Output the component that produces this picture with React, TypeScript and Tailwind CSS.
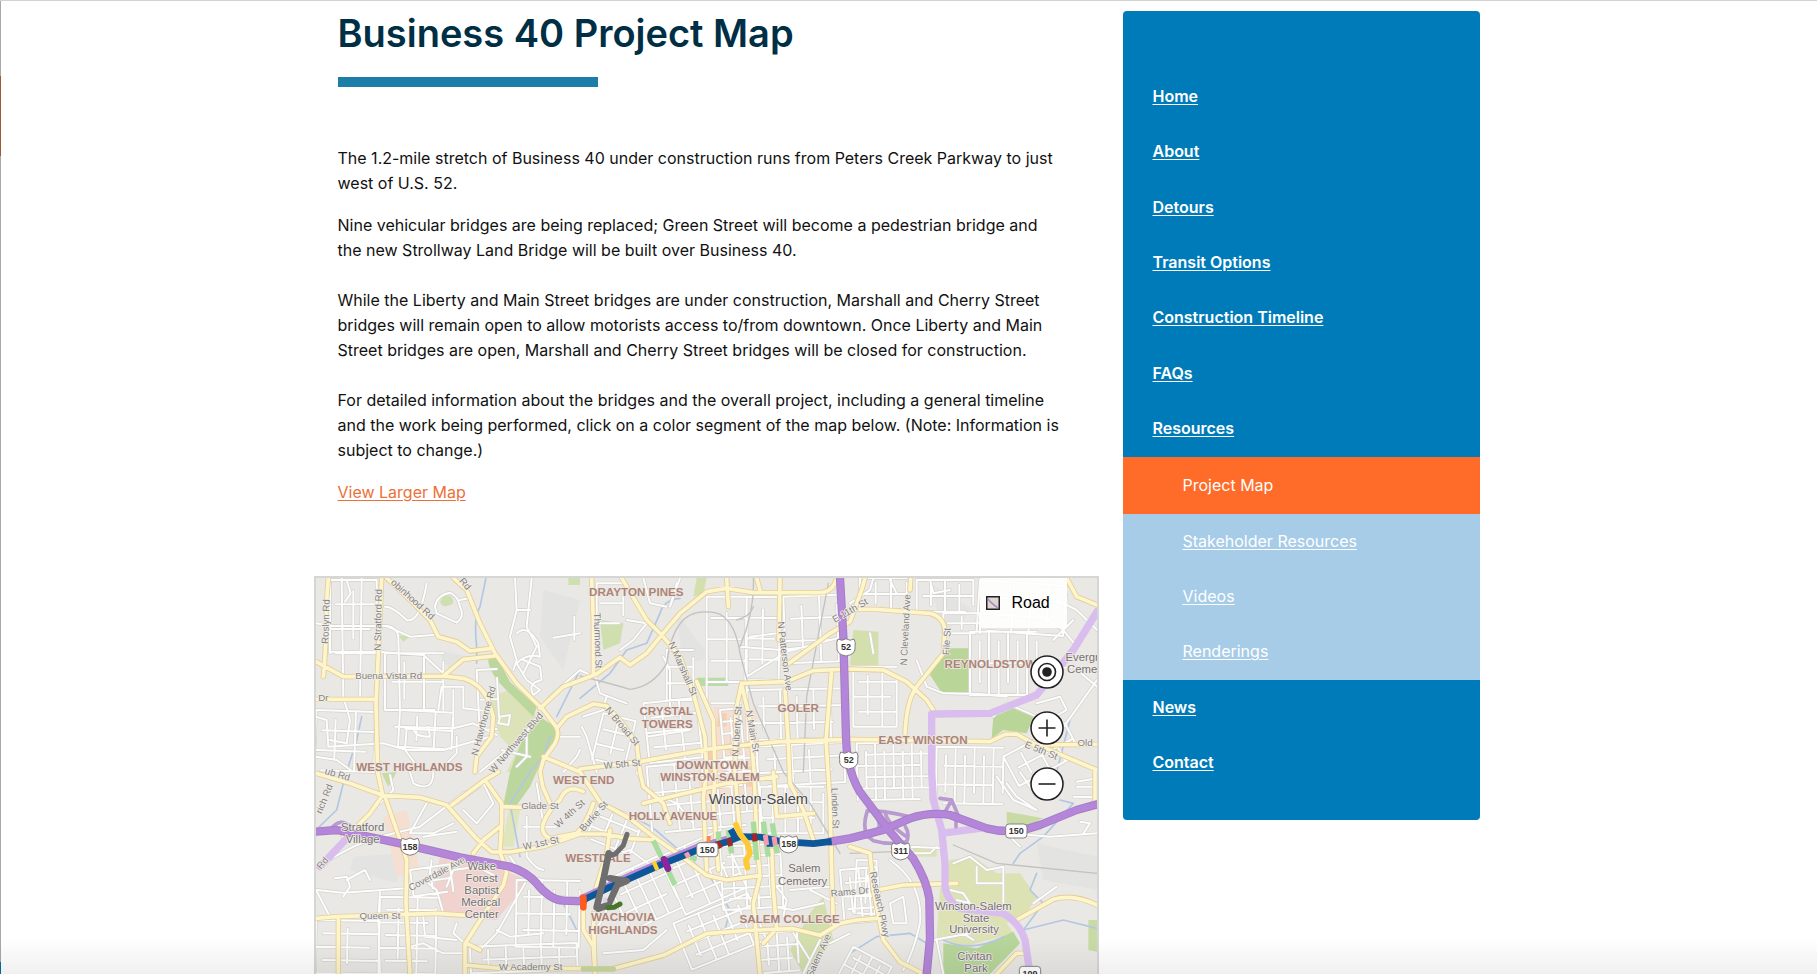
import type { ReactNode } from 'react';

type Grid = [x: number, y: number, w: number, h: number, cols: number, rows: number, angle: number];
type Label = [text: string, x: number, y: number, angle?: number];

const topLinks = ['Home', 'About', 'Detours', 'Transit Options', 'Construction Timeline', 'FAQs', 'Resources'];
const subLinks = ['Stakeholder Resources', 'Videos', 'Renderings'];
const endLinks = ['News', 'Contact'];

const grids: Grid[] = [
  [60, 30, 140, 220, 2, 3, 0],
  [225, 250, 175, 170, 3, 2, 0],
  [270, 420, 160, 110, 3, 2, 3],
  [18, 420, 180, 180, 3, 3, 2],
  [500, 300, 60, 180, 1, 2, -3],
  [210, 980, 170, 230, 3, 6, 1],
  [18, 1050, 190, 160, 2, 4, 1],
  [480, 1130, 320, 80, 6, 2, -2],
  [620, 930, 190, 200, 5, 4, 1],
  [300, 900, 120, 80, 2, 2, -8],
  [860, 40, 80, 120, 1, 2, 0],
  [1190, 80, 120, 320, 2, 5, 0],
  [1310, 80, 100, 250, 2, 4, 1],
  [1420, 80, 160, 200, 3, 3, -2],
  [1000, 400, 160, 180, 3, 4, -6],
  [1310, 360, 300, 150, 6, 3, -1],
  [1230, 420, 60, 180, 2, 5, -5],
  [1010, 590, 330, 200, 8, 5, -5],
  [1340, 530, 260, 120, 5, 3, -3],
  [1350, 650, 190, 140, 5, 3, 0],
  [1650, 24, 140, 95, 3, 2, 0],
  [1820, 30, 170, 95, 4, 2, 0],
  [1900, 130, 110, 60, 2, 2, 0],
  [1980, 185, 200, 190, 7, 2, 0],
  [2010, 30, 260, 150, 5, 3, 4],
  [1630, 290, 130, 180, 3, 4, 0],
  [1640, 520, 220, 170, 8, 5, -1],
  [1880, 530, 200, 170, 7, 3, 1],
  [2080, 560, 210, 100, 4, 2, -28],
  [890, 930, 170, 170, 4, 3, -25],
  [1050, 860, 200, 190, 5, 4, -24],
  [1090, 1060, 240, 150, 6, 4, -22],
  [1340, 1090, 120, 120, 4, 3, -4],
  [870, 700, 140, 110, 3, 3, 22],
  [1230, 830, 180, 190, 5, 6, -3],
  [1590, 900, 110, 160, 4, 4, -5],
  [1630, 1130, 130, 90, 4, 3, 28],
  [1640, 870, 60, 160, 2, 3, 2],
  [880, 430, 100, 140, 2, 3, 14],
  [1070, 240, 80, 150, 1, 3, 0],
];

const gridPath = ([x, y, w, h, cols, rows, angle]: Grid) => {
  const a = (angle * Math.PI) / 180;
  const p = (u: number, v: number) =>
    `${Math.round(x + u * Math.cos(a) - v * Math.sin(a))} ${Math.round(y + u * Math.sin(a) + v * Math.cos(a))}`;
  let d = '';
  for (let i = 0; i <= cols; i++) d += `M${p((w * i) / cols, i % 2 ? h * 0.15 : 0)}L${p((w * i) / cols, i % 3 === 1 ? h * 0.8 : h)}`;
  for (let j = 0; j <= rows; j++) d += `M${p(j % 2 ? w * 0.12 : 0, (h * j) / rows)}L${p(j % 3 === 2 ? w * 0.85 : w, (h * j) / rows)}`;
  return d;
};

const streets = [
  ...grids.map(gridPath),
  'M95 24L100 380L120 450L110 520L60 510M155 24L150 390M110 30L122 70L105 95M225 110Q250 110 290 150Q330 160 350 40M18 160L60 168L230 168Q260 170 265 200L270 420M60 245L200 245L340 255L400 310M230 168L300 200L370 195',
  'M375 110Q380 75 420 68Q445 80 450 110Q465 140 440 158L380 130ZM450 90L480 84M615 24L620 120L600 200L620 270L610 300M665 24L650 170L680 230L640 310M620 120L660 120M620 190Q650 160 685 220L690 260Q650 250 620 280L650 330L690 360L670 375Q650 340 695 330L690 290L640 270M730 203L810 190M793 140L793 210',
  'M18 440L50 450L55 530L220 520L290 540L400 540L540 500M255 470L430 475L490 460L560 495M385 420L395 350L460 350L460 415L550 425M430 360L430 470M290 475L285 540L330 600M312 480Q315 500 360 500L355 470M440 500L440 550L400 590M570 440L600 435L595 465L565 460Z',
  'M510 606L640 500L720 380L810 300M18 560L80 570L130 606M575 540L660 560M650 490L650 560L620 590M760 606L800 560L810 540M740 500L810 500',
  'M18 890L130 830L210 800L330 770L460 670L530 640M240 615L250 660L210 700M300 606L310 640Q370 670 370 606M350 700L300 790L370 790L430 760M340 800L440 785M75 925L110 920L120 950L100 980M110 930L165 900M165 900L180 930M20 960L100 968L290 955M18 960L60 1040M210 960L205 1050L210 1212M365 870L355 940L380 960L400 1030M410 950L430 900L500 890L560 920M645 940L560 1090L510 1140M340 1040L345 1100L440 1110M440 1060L430 1090L465 1120M560 1080L600 1100L700 1090M300 1130L340 1120L400 1150L465 1150',
  'M650 740L650 860Q680 900 700 900M640 770L740 770M600 860L640 920L700 930M680 640L700 760M440 700L520 640L550 700L500 760L460 720',
  'M860 606L830 500L815 470M1100 40L1080 110L1110 24M1000 24L1020 100L1070 110M1140 480L1010 500M1060 260L1080 300L1080 420M850 300L870 370L950 400M820 440L880 420M890 380L880 410M810 300L850 320M950 150L1010 160L970 210L930 240',
  'M1310 320L1430 245L1540 215L1600 200M1320 200L1400 190M1290 230L1410 240L1500 230M1620 100L1680 60L1690 24M1740 30L1760 70M1860 30L1870 70L1920 60M1680 190L1690 250M1820 270L1850 350L1900 370L2010 372L2090 380M2150 110L2260 180L2300 230M2230 210L2290 150M2240 90L2300 120L2361 180M2200 300L2290 290L2361 350M2180 400L2250 380L2270 420L2180 470M2240 500L2361 330M2050 440L2090 400L2180 440',
  'M2060 620L2110 690L2180 720L2120 680L2090 640M2130 606L2180 680L2260 640M2361 625L2300 635M2300 650L2361 650M2290 680L2361 682M2010 775L2100 790L2220 800L2361 790M2310 755L2340 760L2320 790M2100 800L2130 830M1790 850L1860 850L1880 830M1800 830L1905 835M1930 880L1980 860L2030 900L2080 890L2080 1000M2000 890L2000 940L2080 940M1920 960L1960 970L1980 1000L1940 990M1740 1000L1780 980L1790 1060L1750 1060ZM1740 870Q1840 940 1830 1060Q1810 1150 1780 1200M1870 1110L1980 1090M1960 1090L1990 1110M1880 1110L1900 1212M2170 1000L2240 950',
  'M1400 950L1430 990L1420 1040M1390 1010L1450 1020L1540 1000M1450 1090L1500 1170L1480 1212M1530 1110L1490 1190M1500 960L1580 1000M1440 960L1560 950M980 606L1010 660L1100 700L1150 760M900 860L960 840L1040 900M880 1150L1000 1140L1070 1080M830 1100L870 1060L900 1000M1560 1120L1620 1090',
];

const roads = [
  'M55 24L50 90L48 200L43 290L40 320',
  'M215 24L212 100L205 250L198 400L203 606L218 676',
  'M18 275L100 320L400 318L460 325Q510 340 535 390L550 440L545 500L500 560L495 606',
  'M18 388L195 388',
  'M430 24L470 60L510 160L555 250L620 340L700 420L738 470Q750 490 735 520L700 570L690 606L698 650L720 700',
  'M230 24L300 90L360 150L385 200L440 215L480 243L545 235',
  'M400 318L460 268L552 258',
  'M690 415L760 350L860 312L930 262L960 285L1010 250L1055 195L1110 130L1190 65L1250 55L1330 68L1530 68Q1570 66 1580 24',
  'M740 475L770 440L850 402L890 408L930 450L980 520L990 606L1000 650L1060 700L1080 760',
  'M700 560L810 606L870 696L960 746L1030 800L1110 856L1190 916L1250 930L1350 916',
  'M18 610L120 640L218 676L330 682L410 705L500 806L545 846L600 846L700 830L810 792L880 792L960 806L1040 810',
  'M218 676L180 730L130 780L100 800',
  'M225 680L270 810L290 870L288 1000L300 1212',
  'M425 705L525 630L565 606M525 630L575 700L575 756L570 846L590 906L580 946L520 1036L465 1121L465 1212',
  'M490 850L520 810L570 770',
  'M575 710L640 712M470 1120L510 1140',
  'M18 1045L80 1040L380 1030L470 1036M85 1040L85 1212',
  'M465 1185L570 1195L910 1196L1060 1156L1190 1091L1310 1081L1450 1076L1530 1096L1590 1060L1640 1050L1700 1045',
  'M820 665Q770 640 750 690Q715 720 700 760Q690 790 720 806L800 790Q830 760 850 700',
  'M820 990L820 1080L850 1130L855 1212M850 1030L855 1212M900 780L890 850L850 980',
  'M935 24L1010 150L1055 195L1110 260L1150 370L1185 500L1190 606L1180 680L1190 900',
  'M1160 335L1210 450L1215 606L1210 700L1225 900',
  'M845 24L850 150L850 310',
  'M1410 24L1407 210M1425 360L1435 520L1440 640L1480 720L1510 810M1390 606L1400 740L1510 730',
  'M1295 340L1430 335L1510 302L1620 297L1720 300L1790 335L1850 390L1870 420',
  'M1430 285L1560 190L1620 155L1655 60L1665 24',
  'M810 597L990 575L1210 535L1410 515L1620 508L2040 515L2085 493L2120 492L2160 515L2361 600M2160 525L2361 523',
  'M1295 340L1278 420L1275 606L1290 800M1295 345L1320 450L1332 606L1340 800L1350 920L1330 1000L1350 1212',
  'M1385 840L1390 960L1400 1076L1360 1120',
  'M1565 300L1548 510L1560 700L1565 900L1570 1060',
  'M1620 118L1700 118L1860 130Q1900 140 1905 180L1900 250L1820 350Q1790 390 1785 490',
  'M2270 24L2300 80L2361 105M1802 24L1800 60',
  'M1620 830L1680 850L1690 960L1720 1110L1770 1176L1840 1212',
  'M1700 960L1780 945L1940 940',
  'M2120 1050L2230 988Q2290 970 2361 1005M2060 1212L2120 1150L2150 1150M2355 606L2355 700',
  'M1250 24L1255 110M1350 60L1340 24M1000 700L1250 640L1400 620',
];

const parks: [string, string][] = [
  ['#cfe0b0', 'M400 75Q430 70 430 100Q400 120 390 95ZM262 195L300 200L280 215ZM775 24L810 24L810 45L775 45Z'],
  ['#dce3b8', 'M535 380L600 360L680 440L600 530L570 500ZM590 606L640 500L740 480L640 606Z'],
  ['#bcd79d', 'M535 262L560 262L600 335L680 410L670 440L610 380Q530 310 535 262ZM690 440L735 470L740 510L700 560L660 650L620 706L580 706L600 606L640 500Z'],
  ['#dfe6bb', 'M600 700L630 720L610 830L575 830Z'],
  ['#cfdfae', 'M870 150L940 160L930 220L880 240Z'],
  ['#d3dfac', 'M1160 24L1190 24L1180 70L1150 80ZM1630 180L1705 185L1705 285L1620 285ZM1500 1030L1540 980L1570 1110L1480 1212L1440 1140Z'],
  ['#b5dda5', 'M1160 323L1255 323L1255 348L1165 348Z'],
  ['#b9d597', 'M1900 235L1975 235L1975 368L1895 368L1860 315ZM2050 440L2110 415L2170 440L2150 490L2080 480L2045 505Z'],
  ['#c8dba5', 'M2090 725L2200 745L2150 770L2090 770ZM215 610L260 606L235 650ZM2335 1050L2361 1050L2361 1145L2335 1140Z'],
  ['#dde2b5', 'M1920 870L1990 860L2060 910L2130 910L2180 980L2150 1030L2090 1060L2110 1090L1960 1130L1880 1100L1890 960ZM1810 830L1880 830L1880 860L1810 860Z'],
  ['#b7d69b', 'M1900 1120L2000 1135L2110 1085L2130 1120L2040 1212L1900 1212Z'],
  ['#f0d3cf', 'M390 860L480 860L650 930L610 990L560 1050L400 1040L370 960Z'],
  ['#f5dfd1', 'M1210 410L1340 420L1340 700L1190 690L1150 606L1210 590ZM220 740L290 720L330 900L260 920Z'],
  ['#f7cfae', 'M1225 430L1250 430L1250 470L1220 470ZM1260 460L1290 460L1290 600L1260 600ZM1180 540L1215 540L1215 620L1180 620ZM1300 590L1330 590L1330 650L1300 650Z'],
];

const waters = [
  'M528 24L510 110Q490 140 500 230L500 280M155 440L140 510L110 606M100 640L80 720L18 780M810 300L740 440M720 500L700 560L660 606L600 700L630 860',
  'M1110 85Q1060 90 1050 130L1010 220L950 240L900 310L810 385M960 740Q1020 760 1060 800L1200 920L1260 1020L1240 1100M760 1000L810 1100',
  'M2250 690L2290 700L2200 800L2130 850L2110 880M2180 910L2160 960L2200 1000L2140 1080L2260 1050L2361 1075M1900 1110Q1980 1150 2080 1100M1620 1150L1700 1100L1800 1090L1850 1120M2280 450L2240 606',
];

const hoods: Label[] = [
  ['WEST HIGHLANDS', 298, 604], ['DRAYTON PINES', 979, 78], ['CRYSTAL', 1069, 434], ['TOWERS', 1072, 473],
  ['DOWNTOWN', 1207, 597], ['WINSTON-SALEM', 1200, 634], ['GOLER', 1465, 425], ['WEST END', 821, 641],
  ['HOLLY AVENUE', 1089, 749], ['WESTDALE', 864, 876], ['WACHOVIA', 939, 1052], ['HIGHLANDS', 939, 1091],
  ['SALEM COLLEGE', 1439, 1060], ['EAST WINSTON', 1839, 521], ['REYNOLDSTOWN', 2054, 293],
];

const places: Label[] = [
  ['Stratford', 158, 784], ['Village', 158, 819], ['Wake', 515, 899], ['Forest', 515, 936], ['Baptist', 515, 972],
  ['Medical', 512, 1008], ['Center', 515, 1043], ['Salem', 1483, 905], ['Cemetery', 1478, 944],
  ['Winston-Salem', 1990, 1019], ['State', 1998, 1055], ['University', 1992, 1090], ['Civitan', 1994, 1171], ['Park', 1998, 1207],
];

const roadNames: Label[] = [
  ['Roslyn Rd', 57, 155, -88], ['N Stratford Rd', 214, 150, -89], ['Buena Vista Rd', 236, 326, 0], ['Dr', 40, 393, 0],
  ['Rd', 458, 48, 50], ['obinhood Rd', 302, 95, 42], ['N Hawthorne Rd', 530, 455, -75], ['W Northwest Blvd', 625, 525, -49],
  ['ub Rd', 80, 622, 16], ['rich Rd', 52, 690, -68], ['Rd', 45, 885, -50], ['Coverdale Ave', 385, 920, -28],
  ['Queen St', 210, 1048, 0], ['Glade St', 690, 716, 0], ['W 1st St', 695, 829, -12], ['W 4th St', 785, 738, -42],
  ['W Academy St', 662, 1200, 0], ['Thurmond St', 854, 212, 88], ['N Marshall St', 1110, 300, 66],
  ['N Patterson Ave', 1415, 260, 83], ['E 11th St', 1625, 130, -30], ['N Broad St', 930, 475, 50],
  ['N Liberty St', 1290, 485, -86], ['N Main St', 1318, 485, 80], ['W 5th St', 937, 592, -5], ['Burke St', 858, 745, -48],
  ['Linden St', 1566, 715, 88], ['Rams Dr', 1620, 975, -5], ['Salem Ave', 1535, 1160, -65], ['Research Pkwy', 1700, 1005, 78],
  ['N Cleveland Ave', 1796, 180, -87], ['File St', 1920, 215, -87], ['E 5th St', 2190, 550, 22], ['Old', 2325, 528, 0],
];

const closures: [string, string, number][] = [
  ['#a9dc9f', 'M1030 812L1095 945M1225 785L1228 835M1255 780L1265 850M1330 755L1340 870M1360 755L1375 860M1387 760L1402 850M1140 860L1160 868', 16],
  ['#0d5698', 'M815 992L890 956L970 921L1060 881L1160 841L1250 816L1290 800L1350 801L1410 814L1510 821L1565 814M1262 778L1278 806M1380 815L1380 830', 20],
  ['#f59ab0', 'M1128 848L1136 862M1366 795L1370 825M1392 800L1396 826', 15],
  ['#f98b4b', 'M1190 808L1202 808', 20],
  ['#a32626', 'M1222 815L1232 834M1256 806L1262 828M1332 790L1335 814', 15],
  ['#ffd12e', 'M1031 875L1042 900', 13],
  ['#ffc933', 'M1278 764L1290 792L1312 820L1320 850L1308 870L1312 893', 17],
  ['#8e24a0', 'M1062 868L1074 896', 20],
  ['#6e6e6e', 'M951 793L940 826L916 852L892 858', 15],
  ['#6e6e6e', 'M896 850L882 920L860 1012M900 925L950 933L922 945L895 1005L865 1016', 20],
  ['#48752c', 'M893 1013L912 1012L930 1002', 15],
  ['#ff5a1f', 'M820 983L820 1012', 20],
];

const freeway =
  'M18 785L80 780L270 820L450 862L600 890Q650 905 680 940Q720 990 760 992L820 994M1560 815L1620 805L1720 780L1800 745Q1860 725 1920 735L2030 775Q2110 795 2190 765L2300 720L2361 703M1590 24L1600 200L1608 500Q1610 600 1650 666L1740 785L1810 866Q1850 930 1858 986L1860 1106L1850 1212';

const shieldPath = 'M-24 -24Q-12 -16 0 -25Q12 -16 24 -24Q30 -14 27 -2Q31 22 0 27Q-31 22 -27 -2Q-30 -14 -24 -24Z';
const shields: Label[] = [['158', 300, 829], ['52', 1608, 231], ['52', 1616, 570], ['158', 1436, 822], ['311', 1772, 843]];
const plates: Label[] = [['150', 1192, 839], ['150', 2119, 783], ['109', 2160, 1210]];

function Names({ items, className }: { items: Label[]; className: string }) {
  return (
    <g className={className} textAnchor="middle" strokeLinejoin="round" paintOrder="stroke">
      {items.map(([text, x, y, angle], i) => (
        <text key={i} x={x} y={y} transform={angle ? `rotate(${angle} ${x} ${y})` : undefined}>{text}</text>
      ))}
    </g>
  );
}

function StreetMap() {
  const minor = streets.join('');
  const major = roads.join('');
  return (
    <svg viewBox="18 24 2343 1188" preserveAspectRatio="xMidYMin slice" className="block h-[396px] w-full font-['Liberation_Sans',Arial,sans-serif]" role="img" aria-label="Business 40 project area">
      <rect x="0" y="0" width="2400" height="1240" fill="#e9e8e5" />
      <path d="M700 60L810 90L760 300L690 200ZM380 240L480 260L420 300ZM1100 130L1200 260L1120 290ZM2180 820L2361 860L2361 960L2200 930ZM130 860L270 850L260 940L120 900ZM1860 40L1990 120L1900 190Z" fill="#e3e3e1" />
      {parks.map(([fill, d], i) => <path key={i} d={d} fill={fill} />)}
      <g fill="none" strokeLinecap="round" strokeLinejoin="round">
        {waters.map((d) => <path key={d} d={d} stroke="#b3c7e2" strokeWidth="5" />)}
        <path d={minor} stroke="#d2d1ce" strokeWidth="10" />
        <path d={minor} stroke="#fdfdfb" strokeWidth="6" />
        <path d="M810 318Q900 340 960 358Q1030 350 1070 280Q1090 120 1190 126Q1270 120 1290 250L1330 400L1420 606L1500 700L1590 850M1330 24Q1335 120 1290 230M1280 150Q1320 140 1330 110M1555 40L1490 380L1480 606M1620 850L1750 845M1930 825L2060 880L2361 910" stroke="#c2c2c0" strokeWidth="4" />
        <path d={major} stroke="#e6cd94" strokeWidth="16" />
        <path d={major} stroke="#fdf5cc" strokeWidth="11" />
        <path d="M820 1197L910 1197" stroke="#c9d9a0" strokeWidth="16" />
        <path d="M2361 125L2290 240L2180 375L2040 430L1865 432L1865 606L1870 690L1895 780L1905 880L1905 950Q1915 1000 1950 1015L2080 1030Q2130 1060 2145 1110L2160 1212M1910 788L2010 775M30 890L115 800" stroke="#d8bdee" strokeWidth="22" />
        <path d="M1672 722Q1650 790 1690 812Q1740 826 1790 815Q1800 790 1786 770M1672 722Q1720 722 1790 738M1690 730Q1720 760 1700 785Q1690 800 1670 800M1725 725Q1730 760 1790 800M1890 685L1925 690L1944 735M1925 690L1900 735M1938 735L1938 770M60 780Q90 740 120 770" stroke="#b79bd0" strokeWidth="11" />
        <path d={freeway} stroke="#a67dc6" strokeWidth="25" />
        <path d={freeway} stroke="#b486d9" strokeWidth="19" />
        <path d="M815 984L970 911L1160 831L1290 796" stroke="#b486d9" strokeWidth="18" />
      </g>
      <Names items={roadNames} className="fill-[#85827e] stroke-[#f1efeb] stroke-[5px] text-[29px]" />
      <Names items={hoods} className="fill-[#ac8477] stroke-[#eeeae6] stroke-[5px] text-[35px] font-bold" />
      <g fill="none" strokeLinejoin="round">
        {closures.map(([stroke, d, width], i) => (
          <path key={i} d={d} stroke={stroke} strokeWidth={width} strokeLinecap={i > 5 ? 'round' : 'butt'} />
        ))}
        <path d="M879 984L890 982L892 996L880 998Z" fill="#dcd3e4" stroke="#dcd3e4" />
      </g>
      <Names items={places} className="fill-[#77706f] stroke-[#efedea] stroke-[5px] text-[34px]" />
      <Names items={[['Winston-Salem', 1345, 702]]} className="fill-[#4a4a4a] stroke-[#f3f1ee] stroke-[5px] text-[44px]" />
      <Names items={[['Evergreen', 2345, 272], ['Cemetery', 2345, 308]]} className="fill-[#77706f] stroke-[#efedea] stroke-[5px] text-[34px]" />
      {shields.map(([text, x, y], i) => (
        <g key={i} transform={`translate(${x} ${y})`}>
          <path d={shieldPath} fill="#fff" stroke="#85817f" strokeWidth="3" />
          <text y="10" textAnchor="middle" className="fill-[#333] text-[27px] font-bold">{text}</text>
        </g>
      ))}
      {plates.map(([text, x, y], i) => (
        <g key={i} transform={`translate(${x} ${y})`}>
          <rect x="-32" y="-21" width="64" height="42" rx="10" fill="#fff" stroke="#85817f" strokeWidth="3" />
          <text y="10" textAnchor="middle" className="fill-[#333] text-[27px] font-bold">{text}</text>
        </g>
      ))}
    </svg>
  );
}

function MapButton({ label, children }: { label: string; children: ReactNode }) {
  return (
    <button type="button" aria-label={label} className="flex size-[34px] items-center justify-center rounded-full bg-white">
      <svg viewBox="0 0 34 34" className="size-[34px]" fill="none" stroke="#222" strokeWidth="1.6">
        <circle cx="17" cy="17" r="16" />
        {children}
      </svg>
    </button>
  );
}

function NavLink({ children, sub = false }: { children: string; sub?: boolean }) {
  return (
    <li className={sub ? 'flex items-center pb-0.5 pl-[60px]' : 'flex items-center pb-0.5 pl-[30px] font-semibold'}>
      <a href="#" className="underline underline-offset-2">{children}</a>
    </li>
  );
}

export default function App() {
  return (
    <div className="relative min-h-screen overflow-hidden border-t border-[#d2d2d2] bg-white font-[Inter,sans-serif] text-base text-[#111]">
      <div className="absolute inset-y-0 left-0 flex w-px flex-col bg-[#a8a8a8]">
        <div className="mt-[75px] h-20 bg-[#9b5a35]" />
        <div className="mt-auto h-3 bg-[#0a6a96]" />
      </div>
      <div className="mx-auto flex max-w-[1190px] items-start gap-6 pr-6">
        <main className="min-w-0 flex-1">
          <div className="px-6">
            <h1 className="pt-2 text-[38px] leading-[48px] font-semibold text-[#002f45]">Business 40 Project Map</h1>
            <div className="mt-5 h-2.5 w-[260px] bg-[#1b7da8]" />
            <div className="mt-[59px] space-y-[17px] leading-[25px]">
              <p>The 1.2-mile stretch of Business 40 under construction runs from Peters Creek Parkway to just<br />west of U.S. 52.</p>
              <p>
                Nine vehicular bridges are being replaced; Green Street will become a pedestrian bridge and<br />
                the new Strollway Land Bridge will be built over Business 40.<br /><br />
                While the Liberty and Main Street bridges are under construction, Marshall and Cherry Street<br />
                bridges will remain open to allow motorists access to/from downtown. Once Liberty and Main<br />
                Street bridges are open, Marshall and Cherry Street bridges will be closed for construction.<br /><br />
                For detailed information about the bridges and the overall project, including a general timeline<br />
                and the work being performed, click on a color segment of the map below. (Note: Information is<br />
                subject to change.)
              </p>
              <p><a href="#" className="text-[#ec7038] underline underline-offset-2">View Larger Map</a></p>
            </div>
          </div>
          <section aria-label="Project map" className="relative mt-[71px] border-2 border-b-0 border-[#d6d6d4]">
            <StreetMap />
            <button type="button" className="absolute top-0 right-[30px] flex h-[50px] w-[87px] items-center gap-3 bg-white/90 pl-1.5 font-['Liberation_Sans',Arial,sans-serif] text-black">
              <svg viewBox="0 0 14 14" className="size-3.5">
                <rect x=".75" y=".75" width="12.5" height="12.5" fill="#dfd5d3" stroke="#222" strokeWidth="1.5" />
                <path d="M2 3Q5 7 12 12" fill="none" stroke="#a58abc" strokeWidth="1.5" />
              </svg>
              Road
            </button>
            <div className="absolute top-[77px] right-[33px] flex flex-col gap-[22px]">
              <MapButton label="Locate me"><circle cx="17" cy="17" r="8.5" /><circle cx="17" cy="17" r="4.8" fill="#222" stroke="none" /></MapButton>
              <MapButton label="Zoom in"><path d="M17 8.5V25.5M8.5 17H25.5" /></MapButton>
              <MapButton label="Zoom out"><path d="M8.5 17H25.5" /></MapButton>
            </div>
          </section>
        </main>
        <nav aria-label="Business 40" className="mt-2.5 w-[357px] shrink-0 rounded bg-[#007bba] pt-[58px] pb-[30px] text-white">
          <ul className="grid h-[388px]">{topLinks.map((t) => <NavLink key={t}>{t}</NavLink>)}</ul>
          <div className="flex h-[57px] items-center bg-[#ff6b29] pb-0.5 pl-[60px]" aria-current="page">Project Map</div>
          <ul className="grid h-[166px] bg-[#a6cce8]">{subLinks.map((t) => <NavLink key={t} sub>{t}</NavLink>)}</ul>
          <ul className="grid h-[110px]">{endLinks.map((t) => <NavLink key={t}>{t}</NavLink>)}</ul>
        </nav>
      </div>
      <div className="pointer-events-none absolute inset-x-0 bottom-0 h-9 bg-linear-to-b from-transparent to-black/6" />
    </div>
  );
}
